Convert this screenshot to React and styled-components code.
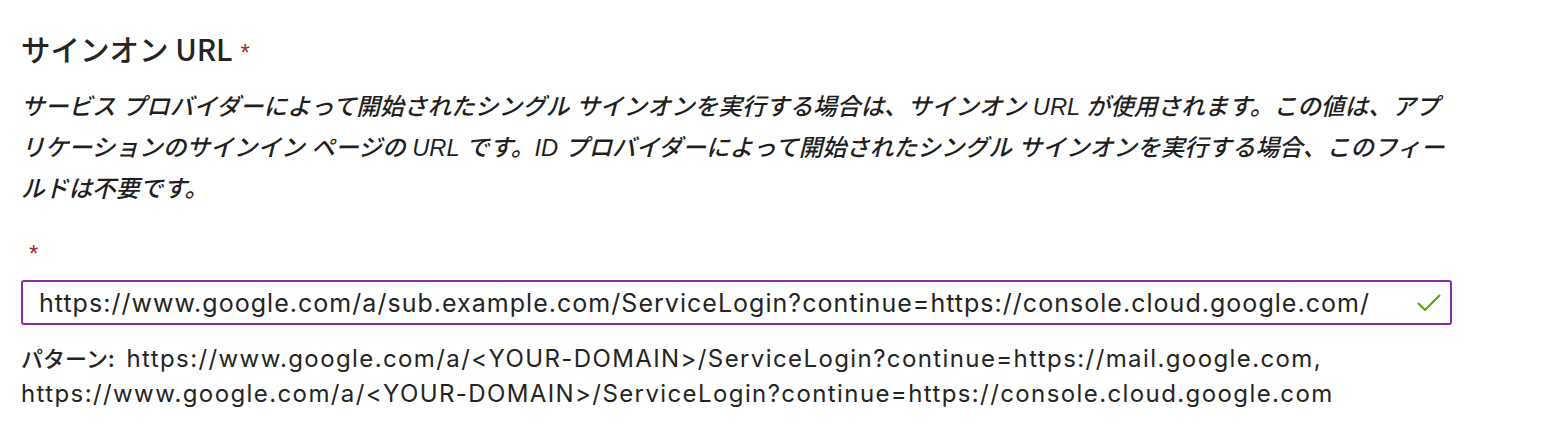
import React from "react";
import styled, { createGlobalStyle } from "styled-components";

const GlobalStyle = createGlobalStyle`
  html, body {
    margin: 0;
    padding: 0;
    background: #ffffff;
  }
  body {
    font-family: "Liberation Sans", "Noto Sans CJK JP", sans-serif;
    color: #242424;
  }
`;

const Page = styled.div`
  width: 1556px;
  height: 448px;
  box-sizing: border-box;
  padding: 26px 21px 0 21px;
`;

const Field = styled.div`
  display: flex;
  flex-direction: column;
  width: 1431px;
`;

const Title = styled.h2`
  margin: 0;
  font-family: "Noto Sans CJK JP", sans-serif;
  font-size: 29.5px;
  line-height: 44px;
  font-weight: 500;
  color: #242424;
  display: flex;
  align-items: baseline;
  gap: 8px;
`;

const Required = styled.span`
  color: #a4262c;
  font-family: "Liberation Sans", sans-serif;
  font-size: ${(p) => p.size || 22}px;
  font-weight: 400;
  font-style: normal;
`;

const Description = styled.p`
  margin: 12px 0 0 0;
  width: 1450px;
  font-size: 23.7px;
  line-height: 41px;
  font-style: italic;
  font-weight: 500;
  color: #1f1f1f;
`;

const StarRow = styled.div`
  height: 40px;
  display: flex;
  align-items: center;
  padding-left: 8px;
  margin-top: 24px;
`;

const InputBox = styled.div`
  margin-top: 6px;
  height: 45px;
  box-sizing: border-box;
  border: 2px solid #8a2ba6;
  border-radius: 3px;
  display: flex;
  align-items: center;
  padding: 0 9px 0 16px;
`;

const InputText = styled.input`
  flex: 1;
  border: none;
  outline: none;
  font-family: "Inter", sans-serif;
  font-size: 25px;
  letter-spacing: 1.03px;
  color: #242424;
  padding: 0;
  background: transparent;
`;

const Check = styled.svg`
  width: 24px;
  height: 17px;
  flex: none;
`;

const Pattern = styled.div`
  margin-top: 15px;
  font-family: "Inter", "Noto Sans CJK JP", sans-serif;
  font-size: 24px;
  letter-spacing: 1.4px;
  line-height: 35px;
  color: #242424;
`;

const PatternLabel = styled.span`
  font-family: "Noto Sans CJK JP", sans-serif;
  font-size: 22px;
  font-weight: 500;
  letter-spacing: 0;
  margin-right: 12px;
`;

export default function App() {
  return (
    <>
      <GlobalStyle />
      <Page>
        <Field>
          <Title>
            サインオン URL <Required size={24}>*</Required>
          </Title>
          <Description>
            サービス プロバイダーによって開始されたシングル サインオンを実行する場合は、サインオン URL が使用されます。この値は、アプ
            <br />
            リケーションのサインイン ページの URL です。ID プロバイダーによって開始されたシングル サインオンを実行する場合、このフィー
            <br />
            ルドは不要です。
          </Description>
          <StarRow>
            <Required size={24}>*</Required>
          </StarRow>
          <InputBox>
            <InputText
              readOnly
              value="https://www.google.com/a/sub.example.com/ServiceLogin?continue=https://console.cloud.google.com/"
            />
            <Check viewBox="0 0 24 17">
              <path d="M1 9 L8 16 L23 1" fill="none" stroke="#57a300" strokeWidth="2" />
            </Check>
          </InputBox>
          <Pattern>
            <PatternLabel>パターン:</PatternLabel>
            https://www.google.com/a/&lt;YOUR-DOMAIN&gt;/ServiceLogin?continue=https://mail.google.com,
            <br />
            https://www.google.com/a/&lt;YOUR-DOMAIN&gt;/ServiceLogin?continue=https://console.cloud.google.com
          </Pattern>
        </Field>
      </Page>
    </>
  );
}
